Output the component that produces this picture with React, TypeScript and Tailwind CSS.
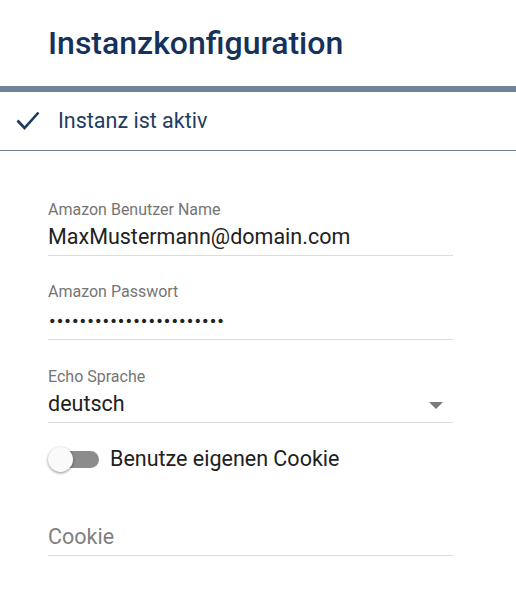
import React from 'react';

function Field({ label, value }: { label: string; value: React.ReactNode }) {
  return (
    <div className="w-[405px] border-b border-[#dcdcdc] pb-[4px]">
      <div className="text-[16px] leading-[20px] text-[#757575]">{label}</div>
      <div className="mt-[3px] text-[21.5px] leading-[28px] text-[#212121]">{value}</div>
    </div>
  );
}

export default function App() {
  return (
    <div className="w-[516px] h-[595px] bg-white font-['Roboto',sans-serif]">
      {/* Header */}
      <div className="h-[86px] flex items-center pl-12">
        <h1 className="text-[32px] font-medium text-[#14325a]">Instanzkonfiguration</h1>
      </div>
      <div className="h-[6px] bg-[#6f8399]" />

      {/* Active row */}
      <div className="h-[59px] flex items-center pl-[16px] border-b border-[#6f8399]">
        <svg width="24" height="20" viewBox="0 0 24 20" className="mr-[18px]">
          <path d="M1.5 9.5 L8.5 17 L22.5 1.5" fill="none" stroke="#1c3a5e" strokeWidth="2.6" />
        </svg>
        <span className="text-[21.5px] text-[#1f3c62]">Instanz ist aktiv</span>
      </div>

      {/* Form */}
      <div className="pl-12 pt-[49px] flex flex-col">
        <Field label="Amazon Benutzer Name" value="MaxMustermann@domain.com" />
        <div className="mt-[26px]">
          <Field
            label="Amazon Passwort"
            value={<span className="text-[14.5px] tracking-[-0.9px] font-['DejaVu_Sans',sans-serif]">{'\u2022'.repeat(23)}</span>}
          />
        </div>
        <div className="mt-[27px] relative w-[405px]">
          <Field label="Echo Sprache" value="deutsch" />
          <div className="absolute right-[10px] top-[35px] w-0 h-0 border-l-[7px] border-r-[7px] border-t-[7px] border-l-transparent border-r-transparent border-t-[#7a7a7a]" />
        </div>

        {/* Toggle */}
        <div className="mt-[22px] h-[28px] flex items-center">
          <div className="relative w-[51px] h-[28px] flex items-center">
            <div className="absolute left-[14px] w-[37px] h-[17px] rounded-full bg-[#8c8c8c]" />
            <div className="absolute left-0 w-[25px] h-[25px] rounded-full bg-[#fafafa] shadow-[0_1px_3px_rgba(0,0,0,0.45)]" />
          </div>
          <span className="ml-[11px] text-[21.5px] text-[#212121]">Benutze eigenen Cookie</span>
        </div>

        {/* Cookie */}
        <div className="mt-[50px] w-[405px] border-b border-[#dcdcdc] pb-[4px]">
          <div className="text-[21.5px] leading-[28px] text-[#808080]">Cookie</div>
        </div>
      </div>
    </div>
  );
}
